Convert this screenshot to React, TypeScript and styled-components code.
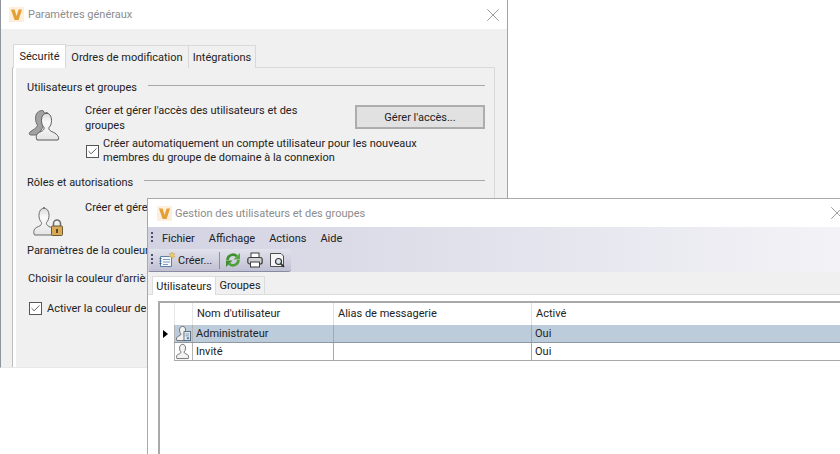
import React from 'react';
import styled, { createGlobalStyle } from 'styled-components';
import { X, Check } from 'lucide-react';

const PERSON_PATH =
  'M19.5 4c-4 0-6 3-6 7.500 0 3 1 5.500 2.500 7 .5 1.500-.5 3-3 4-2.500 1-4 2-4.500 4-.3 1.500-.3 3 .5 4.500h21c1-1.500.8-3-.5-4.500-1.500-2-3.500-3-6-4-2-1-3-2.500-2.500-4 1.500-1.500 2.500-4 2.500-7 0-4.500-2-7.500-6-7.500z';

const COLUMNS = [
  { label: "Nom d'utilisateur", width: 141 },
  { label: 'Alias de messagerie', width: 198 },
  { label: 'Activé', width: 316 },
];

const USERS = [
  { name: 'Administrateur', enabled: 'Oui', selected: true },
  { name: 'Invité', enabled: 'Oui', selected: false },
];

const VLogo = () => (
  <LogoBox viewBox="0 0 15 15">
    <rect width="15" height="15" fill="#fdeedd" />
    <path d="M2 2.500h3.600l2 6.400 2-6.400H13L9.600 13H5.600z" fill="#e5a035" />
  </LogoBox>
);

const PersonGradient = ({ id }: { id: string }) => (
  <defs>
    <linearGradient id={id} x1="0" y1="0" x2="0" y2="1">
      <stop offset="0" stopColor="#d8d8d8" />
      <stop offset="0.35" stopColor="#fbfbfb" />
      <stop offset="1" stopColor="#e4e4e4" />
    </linearGradient>
  </defs>
);

const GroupIcon = () => (
  <BlockSvg width="36" height="32" viewBox="0 0 36 32">
    <PersonGradient id="groupFill" />
    <path
      d="M15 1.500c-5 0-7.500 3-7.500 8 0 3 1 5 2 7-1 3-5 4.500-7.500 6.500-1 1-1 3 1 3h7L20 10z"
      fill="#a2a2a2"
      stroke="#6c6c6c"
      strokeWidth="1"
    />
    <path d={PERSON_PATH} fill="url(#groupFill)" stroke="#5a5a5a" strokeWidth="1" />
  </BlockSvg>
);

const LockIcon = () => (
  <BlockSvg width="36" height="33" viewBox="0 0 36 33">
    <PersonGradient id="lockFill" />
    <g transform="translate(-2.500 0)">
      <path d={PERSON_PATH} fill="url(#lockFill)" stroke="#6a6a6a" strokeWidth="1" />
    </g>
    <path d="M25.500 22v-2.500a3.500 3.500 0 0 1 7 0V22" fill="none" stroke="#6e6e6e" strokeWidth="1.600" />
    <rect x="23.500" y="22" width="11" height="9.500" rx="1" fill="#d9a956" stroke="#6b5a33" />
    <rect x="28" y="25" width="2" height="4" fill="#5e4a20" />
  </BlockSvg>
);

const RowUserIcon = ({ admin }: { admin: boolean }) => (
  <svg width="18" height="17" viewBox="0 0 18 17">
    <path
      d="M8 1C5.800 1 4.800 2.800 4.800 5c0 1.700.6 3 1.400 3.800.2 1-.4 1.700-1.800 2.200-1.500.6-2.400 1.300-2.700 2.300-.2.900-.1 1.800.3 2.700h12c.4-.9.500-1.800.3-2.700-.3-1-1.200-1.700-2.700-2.300-1.400-.5-2-1.200-1.800-2.200.8-.8 1.400-2.100 1.400-3.800C11.200 2.800 10.200 1 8 1z"
      fill="#f2f2f2"
      stroke="#5c5c5c"
      strokeWidth="0.900"
    />
    {admin && (
      <g>
        <rect x="9.500" y="6.500" width="7" height="9.500" fill="#e8eef4" stroke="#4d5c6c" strokeWidth="0.900" />
        <path d="M11 9h4M11 11h4" stroke="#5f7f9f" strokeWidth="0.800" />
        <rect x="12.500" y="12.500" width="2.500" height="2" fill="#4d7fae" />
      </g>
    )}
  </svg>
);

const CreateIcon = () => (
  <ToolGlyph width="17" height="16" viewBox="0 0 17 16" $gap={4}>
    <path d="M1.500 4.500h11v10h-11z" fill="#f4f7fb" stroke="#5a7ea6" />
    <path d="M.5 6.500h2M.5 9h2M.5 11.500h2" stroke="#3f5f88" />
    <path d="M4 7.500h7M4 10h7M4 12.500h5" stroke="#7f9cc0" />
    <path d="M13 0l.8 2 2.200-.4-1.300 1.700 1.300 1.700-2.200-.3-.8 2-.8-2-2.200.3 1.300-1.700-1.300-1.700 2.200.4z" fill="#f2cf6a" stroke="#b08f2e" strokeWidth="0.400" />
  </ToolGlyph>
);

const RefreshIcon = () => (
  <ToolGlyph width="16" height="16" viewBox="0 0 16 16" $gap={5}>
    <path d="M2.500 8a5.500 5.500 0 0 1 9.300-3.800" fill="none" stroke="#3f8f2e" strokeWidth="2.600" />
    <path d="M15 1v6.500H8.500z" fill="#59a83a" />
    <path d="M13.500 8a5.500 5.500 0 0 1-9.300 3.800" fill="none" stroke="#4fa038" strokeWidth="2.600" />
    <path d="M1 15V8.500h6.500z" fill="#3f8f2e" />
  </ToolGlyph>
);

const PrintIcon = () => (
  <ToolGlyph width="16" height="16" viewBox="0 0 16 16" $gap={6}>
    <rect x="4" y="1" width="8" height="5" fill="#fff" stroke="#3d3d3d" />
    <rect x=".8" y="5.500" width="14.400" height="6.500" rx="2" fill="#cfcfd4" stroke="#3d3d3d" strokeWidth="1.200" />
    <rect x="3.500" y="10" width="9" height="5" fill="#fff" stroke="#3d3d3d" />
  </ToolGlyph>
);

const PreviewIcon = () => (
  <ToolGlyph width="16" height="16" viewBox="0 0 16 16" $gap={6}>
    <path d="M1.500 1.500h10.500l2.500 2.500v10.500h-13z" fill="#f6f6f8" stroke="#4e4e4e" />
    <circle cx="9.500" cy="9.500" r="3" fill="#dce6f0" stroke="#333" strokeWidth="1.200" />
    <path d="M11.700 11.700l3.300 3.300" stroke="#2d2d2d" strokeWidth="1.700" />
  </ToolGlyph>
);

const CheckBox = () => (
  <CheckFrame>
    <Check size={11} strokeWidth={1.7} color="#333" />
  </CheckFrame>
);

const App = () => {
  return (
    <Desktop>
      <GlobalStyle />
      <BackWindow>
        <TitleBar>
          <VLogo />
          <TitleText>Paramètres généraux</TitleText>
          <CloseButton>
            <X size={22} strokeWidth={0.8} />
          </CloseButton>
        </TitleBar>
        <WindowBody>
          <TabRow>
            <Tab $active $width={53}>
              Sécurité
            </Tab>
            <Tab $width={124}>Ordres de modification</Tab>
            <Tab $width={68}>Intégrations</Tab>
          </TabRow>
          <TabPanel>
            <GroupHeading>Utilisateurs et groupes</GroupHeading>
            <GroupRow>
              <IconSlot>
                <GroupIcon />
              </IconSlot>
              <GroupContent>
                <DescRow>
                  <Description>
                    Créer et gérer l'accès des utilisateurs et des
                    <br />
                    groupes
                  </Description>
                  <PushButton>Gérer l'accès...</PushButton>
                </DescRow>
                <CheckRow>
                  <CheckBox />
                  <span>
                    Créer automatiquement un compte utilisateur pour les nouveaux
                    <br />
                    membres du groupe de domaine à la connexion
                  </span>
                </CheckRow>
              </GroupContent>
            </GroupRow>
            <GroupHeading $top={9}>Rôles et autorisations</GroupHeading>
            <GroupRow>
              <IconSlot>
                <LockIcon />
              </IconSlot>
              <Description $top={2}>Créer et gérer</Description>
            </GroupRow>
            <PlainHeading>Paramètres de la couleur</PlainHeading>
            <PlainLine>Choisir la couleur d'arrière-plan</PlainLine>
            <PlainCheck>
              <CheckBox />
              <span>Activer la couleur de</span>
            </PlainCheck>
          </TabPanel>
        </WindowBody>
      </BackWindow>

      <FrontWindow>
        <FrontTitleBar>
          <VLogo />
          <TitleText>Gestion des utilisateurs et des groupes</TitleText>
          <FrontClose>
            <X size={22} strokeWidth={0.8} />
          </FrontClose>
        </FrontTitleBar>
        <CommandArea>
          <MenuBar>
            <Grip />
            <MenuItem>Fichier</MenuItem>
            <MenuItem>Affichage</MenuItem>
            <MenuItem>Actions</MenuItem>
            <MenuItem>Aide</MenuItem>
          </MenuBar>
          <ToolStrip>
            <Grip />
            <CreateIcon />
            <ToolLabel>Créer...</ToolLabel>
            <ToolSep />
            <RefreshIcon />
            <PrintIcon />
            <PreviewIcon />
          </ToolStrip>
        </CommandArea>
        <FrontTabRow>
          <FrontTab $active $width={64}>
            Utilisateurs
          </FrontTab>
          <FrontTab $width={49}>Groupes</FrontTab>
        </FrontTabRow>
        <FrontPanel>
          <DataGrid>
            <HeadRow>
              <SelectorCell />
              <IconCell />
              {COLUMNS.map((col) => (
                <HeadCell key={col.label} $width={col.width}>
                  {col.label}
                </HeadCell>
              ))}
            </HeadRow>
            {USERS.map((user) => (
              <DataRow key={user.name}>
                <SelectorCell>{user.selected && <RowArrow />}</SelectorCell>
                <RowBody $selected={user.selected}>
                  <IconCell $body>
                    <RowUserIcon admin={user.selected} />
                  </IconCell>
                  <DataCell $width={COLUMNS[0].width}>{user.name}</DataCell>
                  <DataCell $width={COLUMNS[1].width} />
                  <DataCell $width={COLUMNS[2].width}>{user.enabled}</DataCell>
                </RowBody>
              </DataRow>
            ))}
          </DataGrid>
        </FrontPanel>
      </FrontWindow>
    </Desktop>
  );
};

const GlobalStyle = createGlobalStyle`
  html, body {
    margin: 0;
    background: #fff;
    font-family: Roboto, 'Noto Sans', sans-serif;
    font-size: 11px;
    color: #222;
  }
`;

const LogoBox = styled.svg`
  width: 15px;
  height: 15px;
  flex: none;
`;

const BlockSvg = styled.svg`
  display: block;
`;

const ToolGlyph = styled.svg<{ $gap: number }>`
  flex: none;
  margin-left: ${(p) => p.$gap}px;
`;

const Desktop = styled.div`
  position: relative;
  width: 840px;
  height: 454px;
  overflow: hidden;
  background: #fff;
`;

const BackWindow = styled.div`
  position: absolute;
  left: 0;
  top: 0;
  width: 508px;
  height: 368px;
  box-sizing: border-box;
  border-right: 1px solid #a3a3a3;
  border-bottom: 1px solid #e8e8e8;
  border-left: 1px solid #8f959c;
  display: flex;
  flex-direction: column;
  background: #f0f0f0;
`;

const TitleBar = styled.div`
  height: 29px;
  flex: none;
  background: #fff;
  display: flex;
  align-items: center;
  padding: 0 3px 0 8px;
  gap: 4px;
`;

const TitleText = styled.span`
  color: #8c8c8c;
`;

const CloseButton = styled.span`
  margin-left: auto;
  display: flex;
  color: #7a7a7a;
`;

const WindowBody = styled.div`
  flex: 1;
  display: flex;
  flex-direction: column;
  padding: 15px 12px 0 11px;
`;

const TabRow = styled.div`
  display: flex;
  align-items: flex-end;
  height: 24px;
  padding-left: 1px;
`;

const Tab = styled.div<{ $active?: boolean; $width: number }>`
  width: ${(p) => p.$width}px;
  height: ${(p) => (p.$active ? '24px' : '23px')};
  box-sizing: border-box;
  display: flex;
  align-items: center;
  justify-content: center;
  white-space: nowrap;
  background: ${(p) => (p.$active ? '#fff' : '#f0f0f0')};
  border: 1px solid #d9d9d9;
  border-bottom: none;
  margin-right: -1px;
  position: relative;
  z-index: ${(p) => (p.$active ? 1 : 0)};
`;

const TabPanel = styled.div`
  flex: 1;
  border: 1px solid #d9d9d9;
  border-left: 1px solid #bdbdbd;
  border-bottom: none;
  margin-top: -1px;
  padding: 11px 9px 0 14px;
  background: #f0f0f0;
  box-shadow: inset 3px 0 #fff;
`;

const GroupHeading = styled.div<{ $top?: number }>`
  display: flex;
  align-items: center;
  gap: 11px;
  height: 16px;
  margin-top: ${(p) => p.$top ?? 0}px;
  white-space: nowrap;
  &::after {
    content: '';
    flex: 1;
    height: 1px;
    margin-bottom: 3px;
    background: #a8a8a8;
  }
`;

const GroupRow = styled.div`
  display: flex;
  margin-top: 8px;
`;

const IconSlot = styled.div`
  width: 58px;
  flex: none;
  padding: 6px 0 0 1px;
  box-sizing: border-box;
`;

const GroupContent = styled.div`
  flex: 1;
`;

const DescRow = styled.div`
  display: flex;
  justify-content: space-between;
  align-items: flex-start;
`;

const Description = styled.div<{ $top?: number }>`
  line-height: 15px;
  white-space: nowrap;
  margin-top: ${(p) => p.$top ?? 0}px;
`;

const PushButton = styled.div`
  width: 130px;
  height: 24px;
  margin-top: 2px;
  box-sizing: border-box;
  display: flex;
  align-items: center;
  justify-content: center;
  background: #e1e1e1;
  border: 2px solid #adadad;
`;

const CheckRow = styled.div`
  display: flex;
  gap: 4px;
  align-items: center;
  line-height: 14px;
  margin-top: 4px;
  padding-left: 1px;
  white-space: nowrap;
`;

const CheckFrame = styled.span`
  width: 11px;
  height: 11px;
  flex: none;
  display: flex;
  align-items: center;
  justify-content: center;
  border: 1px solid #555;
  background: #fff;
`;

const PlainHeading = styled.div`
  width: 120px;
  margin-top: 6px;
  line-height: 16px;
  white-space: nowrap;
  overflow: hidden;
`;

const PlainLine = styled.div`
  width: 118px;
  margin-top: 12px;
  line-height: 16px;
  padding-left: 1px;
  white-space: nowrap;
  overflow: hidden;
`;

const PlainCheck = styled.div`
  display: flex;
  gap: 5px;
  align-items: center;
  height: 16px;
  margin-top: 13px;
  padding-left: 2px;
  white-space: nowrap;
`;

const FrontWindow = styled.div`
  position: absolute;
  left: 147px;
  top: 198px;
  width: 702px;
  height: 270px;
  box-sizing: border-box;
  border: 1px solid #a8a8a8;
  display: flex;
  flex-direction: column;
  background: #fff;
`;

const FrontTitleBar = styled(TitleBar)`
  height: 28px;
  padding: 0 0 0 9px;
  gap: 3px;
`;

const FrontClose = styled(CloseButton)``;

const CommandArea = styled.div`
  height: 45px;
  flex: none;
  background: linear-gradient(to right, #d2d2e2, #f3f3f7);
`;

const MenuBar = styled.div`
  height: 22px;
  display: flex;
  align-items: center;
  padding-left: 3px;
`;

const Grip = styled.span`
  width: 2px;
  height: 12px;
  flex: none;
  margin-right: 2px;
  background: repeating-linear-gradient(to bottom, #4f4f66 0 2px, transparent 2px 4px);
`;

const MenuItem = styled.span`
  padding: 0 7px;
`;

const ToolStrip = styled.div`
  width: 142px;
  height: 23px;
  box-sizing: border-box;
  margin-left: 1px;
  padding-left: 2px;
  display: flex;
  align-items: center;
  border-radius: 0 3px 3px 0;
  background: linear-gradient(to bottom, #e2e2ec, #c0c0d4);
  border-bottom: 1px solid #8a8aa2;
`;

const ToolLabel = styled.span`
  margin-left: 2px;
  width: 41px;
  white-space: nowrap;
`;

const ToolSep = styled.span`
  width: 1px;
  height: 17px;
  background: #8e8ea2;
`;

const FrontTabRow = styled.div`
  height: 23px;
  flex: none;
  box-sizing: border-box;
  display: flex;
  align-items: flex-end;
  padding: 4px 0 0 4px;
  background: #f0f0f0;
  border-bottom: 1px solid #dcdcdc;
`;

const FrontTab = styled.div<{ $active?: boolean; $width: number }>`
  width: ${(p) => p.$width}px;
  height: ${(p) => (p.$active ? '19px' : '18px')};
  margin-bottom: ${(p) => (p.$active ? '-1px' : '0')};
  box-sizing: border-box;
  display: flex;
  align-items: center;
  justify-content: center;
  white-space: nowrap;
  background: ${(p) => (p.$active ? '#fff' : '#f0f0f0')};
  border: 1px solid #dcdcdc;
  border-bottom: none;
  border-left: ${(p) => (p.$active ? '1px solid #dcdcdc' : 'none')};
`;

const FrontPanel = styled.div`
  flex: 1;
  background: #fff;
  padding: 6px 0 0 10px;
`;

const DataGrid = styled.div`
  height: 100%;
  border-top: 2px solid #a9a9a9;
  border-left: 2px solid #a9a9a9;
  display: flex;
  flex-direction: column;
`;

const HeadRow = styled.div`
  display: flex;
  height: 22px;
  flex: none;
`;

const DataRow = styled.div`
  display: flex;
  height: 18px;
  flex: none;
  line-height: 17px;
`;

const RowBody = styled.div<{ $selected?: boolean }>`
  display: flex;
  flex: 1;
  border-bottom: 1px solid ${(p) => (p.$selected ? '#8d98a3' : '#a8a8a8')};
  background: ${(p) => (p.$selected ? '#bdccda' : '#fff')};
`;

const SelectorCell = styled.div`
  width: 14px;
  flex: none;
  display: flex;
  align-items: center;
  justify-content: center;
`;

const RowArrow = styled.span`
  width: 0;
  height: 0;
  border-left: 5px solid #000;
  border-top: 4.5px solid transparent;
  border-bottom: 4.5px solid transparent;
  margin-right: 3px;
`;

const IconCell = styled.div<{ $body?: boolean }>`
  width: 19px;
  flex: none;
  box-sizing: border-box;
  display: flex;
  align-items: center;
  justify-content: center;
  border-left: 1px solid ${(p) => (p.$body ? '#b4b4b4' : '#e6e6e6')};
  border-right: 1px solid ${(p) => (p.$body ? '#b4b4b4' : '#e6e6e6')};
`;

const HeadCell = styled.div<{ $width: number }>`
  width: ${(p) => p.$width}px;
  flex: none;
  box-sizing: border-box;
  padding: 0 0 1px 4px;
  display: flex;
  align-items: center;
  border-right: 1px solid #e0e0e0;
`;

const DataCell = styled.div<{ $width: number }>`
  width: ${(p) => p.$width}px;
  flex: none;
  box-sizing: border-box;
  padding-left: 3px;
  display: flex;
  align-items: center;
  border-right: 1px solid #a8a8a8;
`;

export default App;
